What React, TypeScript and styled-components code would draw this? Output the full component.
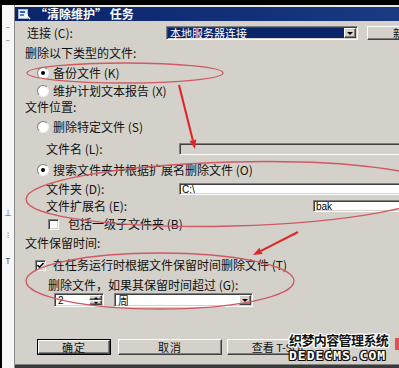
import React from "react";
import styled, { createGlobalStyle, css } from "styled-components";

const GlobalStyle = createGlobalStyle`
  html, body {
    margin: 0;
    padding: 0;
    background: #fff;
    overflow: hidden;
  }
  body {
    font-family: "Noto Sans CJK SC", "Liberation Sans", sans-serif;
  }
`;

const FACE = "#d4d1cb";

const sunken = css`
  border: 1px solid;
  border-color: #808080 #fff #fff #808080;
  box-shadow: inset 1px 1px #404040, inset -1px -1px ${FACE};
`;

const raised = css`
  border: 1px solid;
  border-color: #fff #404040 #404040 #fff;
  box-shadow: inset -1px -1px #808080, inset 1px 1px ${FACE};
`;

const Screen = styled.div`
  position: relative;
  width: 399px;
  height: 368px;
  display: flex;
  flex-direction: column;
  background: #000;
  overflow: hidden;
`;

const TopBlack = styled.div`
  height: 5px;
  flex: none;
`;

const Main = styled.div`
  flex: 1;
  display: flex;
  min-height: 0;
`;

const LeftStrip = styled.div`
  width: 12px;
  flex: none;
  border-left: 2px solid #000;
  border-right: 1px solid #8a8a8a;
  background: #f6f6f6;
  display: flex;
  flex-direction: column;
  align-items: center;
  font-size: 8px;
  color: #555;
  line-height: 8px;
`;

const StripMark = styled.div<{ top: number }>`
  margin-top: ${(p) => p.top}px;
`;

const Window = styled.div`
  flex: 1;
  display: flex;
  flex-direction: column;
  background: ${FACE};
  border-top: 2px solid #e8e6e2;
  overflow: hidden;
`;

const TitleBar = styled.div`
  height: 14px;
  flex: none;
  background: linear-gradient(90deg, #0c2468 0%, #12307a 60%, #1a3a84 100%);
  display: flex;
  align-items: center;
  padding-left: 3px;
  gap: 4px;
`;

const TitleText = styled.span`
  color: #fff;
  font-size: 12px;
  font-weight: 700;
  line-height: 12px;
  white-space: nowrap;
`;

const Body = styled.div`
  flex: 1;
  display: flex;
  flex-direction: column;
  min-height: 0;
`;

const BottomEdge = styled.div`
  height: 3px;
  flex: none;
  background: #3a3a3a;
  border-top: 1px solid #808080;
`;

const Row = styled.div<{ h: number; indent: number; gap?: number; top?: number }>`
  height: ${(p) => p.h}px;
  flex: none;
  display: flex;
  align-items: center;
  padding-left: ${(p) => p.indent}px;
  gap: ${(p) => p.gap ?? 0}px;
  margin-top: ${(p) => p.top ?? 0}px;
`;

const Text = styled.span`
  font-size: 12px;
  line-height: 12px;
  color: #111;
  white-space: nowrap;
`;

const LabelCell = styled(Text)<{ w: number }>`
  width: ${(p) => p.w}px;
  flex: none;
`;

const RadioDot = styled.span<{ on?: boolean }>`
  width: 10px;
  height: 10px;
  flex: none;
  border-radius: 50%;
  background: #fff;
  border: 1px solid;
  border-color: #808080 #f0f0f0 #f0f0f0 #808080;
  display: flex;
  align-items: center;
  justify-content: center;
  margin-right: 4px;
  &::after {
    content: "";
    width: 4px;
    height: 4px;
    border-radius: 50%;
    background: ${(p) => (p.on ? "#000" : "transparent")};
  }
`;

const CheckBox = styled.span<{ gap: number }>`
  width: 9px;
  height: 9px;
  flex: none;
  background: #fff;
  ${sunken};
  margin-right: ${(p) => p.gap}px;
  display: flex;
  align-items: center;
  justify-content: center;
`;

const Field = styled.div<{ disabled?: boolean; w?: number }>`
  height: 12px;
  ${(p) => (p.w ? `width: ${p.w}px; flex: none;` : "flex: 1; margin-right: -20px;")}
  background: ${(p) => (p.disabled ? FACE : "#fff")};
  ${sunken};
  display: flex;
  align-items: center;
  padding-left: 2px;
  font-family: "Liberation Sans", sans-serif;
  font-size: 10px;
  color: #000;
  box-sizing: border-box;
`;

const Combo = styled.div<{ w: number; selected?: boolean }>`
  width: ${(p) => p.w}px;
  height: 14px;
  flex: none;
  box-sizing: border-box;
  background: #fff;
  ${sunken};
  display: flex;
  align-items: stretch;
  padding: 1px;
`;

const ComboValue = styled.div<{ selected?: boolean }>`
  flex: 1;
  display: flex;
  align-items: center;
  padding-left: 2px;
  font-size: 11px;
  line-height: 11px;
  background: ${(p) => (p.selected ? "#0a246a" : "transparent")};
  color: ${(p) => (p.selected ? "#fff" : "#111")};
  white-space: nowrap;
`;

const DropButton = styled.div`
  width: 12px;
  flex: none;
  background: ${FACE};
  ${raised};
  box-sizing: border-box;
  display: flex;
  align-items: center;
  justify-content: center;
  &::after {
    content: "";
    border-left: 3px solid transparent;
    border-right: 3px solid transparent;
    border-top: 3px solid #000;
  }
`;

const SpinBox = styled.div`
  width: 50px;
  height: 14px;
  flex: none;
  box-sizing: border-box;
  background: #fff;
  ${sunken};
  display: flex;
  padding: 1px;
`;

const SpinValue = styled.div`
  flex: 1;
  display: flex;
  align-items: center;
  padding-left: 2px;
  font-family: "Liberation Sans", sans-serif;
  font-size: 10px;
`;

const SpinButtons = styled.div`
  width: 13px;
  flex: none;
  display: flex;
  flex-direction: column;
`;

const SpinHalf = styled.div<{ up?: boolean }>`
  flex: 1;
  background: ${FACE};
  ${raised};
  box-sizing: border-box;
  display: flex;
  align-items: center;
  justify-content: center;
  &::after {
    content: "";
    border-left: 2px solid transparent;
    border-right: 2px solid transparent;
    ${(p) => (p.up ? "border-bottom: 2px solid #000;" : "border-top: 2px solid #000;")}
  }
`;

const Button = styled.div<{ w: number; primary?: boolean }>`
  width: ${(p) => p.w}px;
  height: ${(p) => (p.primary ? 14 : 16)}px;
  flex: none;
  box-sizing: border-box;
  background: ${FACE};
  ${raised};
  ${(p) => p.primary && "outline: 1px solid #000;"}
  display: flex;
  align-items: center;
  justify-content: center;
  font-size: 11px;
  color: #111;
  white-space: nowrap;
  letter-spacing: 1px;
`;

const Overlay = styled.svg`
  position: absolute;
  left: 0;
  top: 0;
  pointer-events: none;
`;

const Watermark = styled.div`
  position: absolute;
  left: 289px;
  top: 332px;
  display: flex;
  flex-direction: column;
  gap: 1px;
  pointer-events: none;
`;

const outline = (c: string) =>
  `1px 0 ${c}, -1px 0 ${c}, 0 1px ${c}, 0 -1px ${c}, 1px 1px ${c}, -1px -1px ${c}, 1px -1px ${c}, -1px 1px ${c}`;

const MarkCn = styled.div`
  font-family: "Noto Sans CJK SC", sans-serif;
  font-size: 13px;
  line-height: 16px;
  font-weight: 700;
  letter-spacing: -0.6px;
  color: #111;
  text-shadow: ${outline("#fff")};
  white-space: nowrap;
`;

const MarkEn = styled.div`
  font-family: "DejaVu Sans Mono", monospace;
  font-size: 13px;
  line-height: 14px;
  font-weight: 700;
  letter-spacing: 1px;
  color: #fff;
  text-shadow: ${outline("#111")};
  white-space: nowrap;
`;

const Check = () => (
  <svg width="7" height="7" viewBox="0 0 7 7">
    <path d="M0.5 3 L2.5 5.2 L6.5 1" stroke="#000" strokeWidth="1.6" fill="none" />
  </svg>
);

const TitleIcon = () => (
  <svg width="13" height="12" viewBox="0 0 13 12">
    <rect x="0.5" y="1.5" width="9" height="9" fill="#e8eef8" stroke="#9fb4d8" />
    <rect x="2" y="3" width="5" height="2" fill="#3060b0" />
    <rect x="2" y="6" width="4" height="2" fill="#6080c0" />
    <path d="M8 7 L12 11" stroke="#fff" strokeWidth="1.5" />
    <circle cx="8.5" cy="7.5" r="1.5" fill="#fff" />
  </svg>
);

const Arrow = ({ x1, y1, x2, y2 }: { x1: number; y1: number; x2: number; y2: number }) => {
  const a = Math.atan2(y2 - y1, x2 - x1);
  const len = 9;
  const w = 3.5;
  const bx = x2 - len * Math.cos(a);
  const by = y2 - len * Math.sin(a);
  const px = -Math.sin(a) * w;
  const py = Math.cos(a) * w;
  return (
    <g>
      <line x1={x1} y1={y1} x2={bx} y2={by} stroke="#e0242a" strokeWidth="2" />
      <polygon points={`${x2},${y2} ${bx + px},${by + py} ${bx - px},${by - py}`} fill="#e0242a" />
    </g>
  );
};

export default function App() {
  return (
    <>
      <GlobalStyle />
      <Screen>
        <TopBlack />
        <Main>
          <LeftStrip>
            <StripMark top={18}>–</StripMark>
            <StripMark top={5}>–</StripMark>
            <StripMark top={165}>⊥</StripMark>
            <StripMark top={14}>⁝</StripMark>
            <StripMark top={18}>T</StripMark>
          </LeftStrip>
          <Window>
            <TitleBar>
              <TitleIcon />
              <TitleText>“清除维护” 任务</TitleText>
            </TitleBar>
            <Body>
              <Row h={24} indent={12}>
                <LabelCell w={139}>连接 (C):</LabelCell>
                <Combo w={192}>
                  <ComboValue selected>本地服务器连接</ComboValue>
                  <DropButton />
                </Combo>
                <Button w={80} style={{ marginLeft: 9, height: 14, justifyContent: "flex-start", paddingLeft: 25 }}>
                  新建...
                </Button>
              </Row>
              <Row h={16} indent={10}>
                <Text>删除以下类型的文件:</Text>
              </Row>
              <Row h={24} indent={22}>
                <RadioDot on />
                <Text>备份文件 (K)</Text>
              </Row>
              <Row h={12} indent={22}>
                <RadioDot />
                <Text>维护计划文本报告 (X)</Text>
              </Row>
              <Row h={20} indent={10}>
                <Text>文件位置:</Text>
              </Row>
              <Row h={20} indent={22}>
                <RadioDot />
                <Text>删除特定文件 (S)</Text>
              </Row>
              <Row h={24} indent={31}>
                <LabelCell w={133}>文件名 (L):</LabelCell>
                <Field disabled />
              </Row>
              <Row h={18} indent={22}>
                <RadioDot on />
                <Text>搜索文件夹并根据扩展名删除文件 (O)</Text>
              </Row>
              <Row h={20} indent={31}>
                <LabelCell w={133}>文件夹 (D):</LabelCell>
                <Field>C:\</Field>
              </Row>
              <Row h={14} indent={31}>
                <LabelCell w={267}>文件扩展名 (E):</LabelCell>
                <Field>bak</Field>
              </Row>
              <Row h={22} indent={33}>
                <CheckBox gap={9} />
                <Text>包括一级子文件夹 (B)</Text>
              </Row>
              <Row h={16} indent={10}>
                <Text>文件保留时间:</Text>
              </Row>
              <Row h={28} indent={20}>
                <CheckBox gap={7}>
                  <Check />
                </CheckBox>
                <Text>在任务运行时根据文件保留时间删除文件 (T)</Text>
              </Row>
              <Row h={12} indent={33}>
                <Text>删除文件，如果其保留时间超过 (G):</Text>
              </Row>
              <Row h={18} indent={39} gap={10}>
                <SpinBox>
                  <SpinValue>2</SpinValue>
                  <SpinButtons>
                    <SpinHalf up />
                    <SpinHalf />
                  </SpinButtons>
                </SpinBox>
                <Combo w={139}>
                  <ComboValue>周</ComboValue>
                  <DropButton />
                </Combo>
              </Row>
              <Row h={16} indent={23} top={30}>
                <Button w={72} primary>
                  确定
                </Button>
                <Button w={104} style={{ marginLeft: 8 }}>
                  取消
                </Button>
                <Button w={104} style={{ marginLeft: 5, letterSpacing: 0 }}>
                  查看 T-SQL
                </Button>
              </Row>
            </Body>
            <BottomEdge />
          </Window>
        </Main>

        <Overlay width="399" height="368" viewBox="0 0 399 368">
          <g fill="none" stroke="#cf5a64" strokeWidth="1.3">
            <ellipse cx="125" cy="73" rx="98" ry="10" />
            <ellipse cx="232" cy="194" rx="206" ry="32" transform="rotate(-1.5 232 194)" />
            <ellipse cx="160" cy="281" rx="134" ry="28" />
          </g>
          <Arrow x1={179} y1={85} x2={195} y2={149} />
          <Arrow x1={298} y1={232} x2={253} y2={255} />
          <rect x="395" y="338" width="4" height="12" fill="#e05050" />
        </Overlay>

        <Watermark>
          <MarkCn>织梦内容管理系统</MarkCn>
          <MarkEn>DEDECMS.COM</MarkEn>
        </Watermark>
      </Screen>
    </>
  );
}
